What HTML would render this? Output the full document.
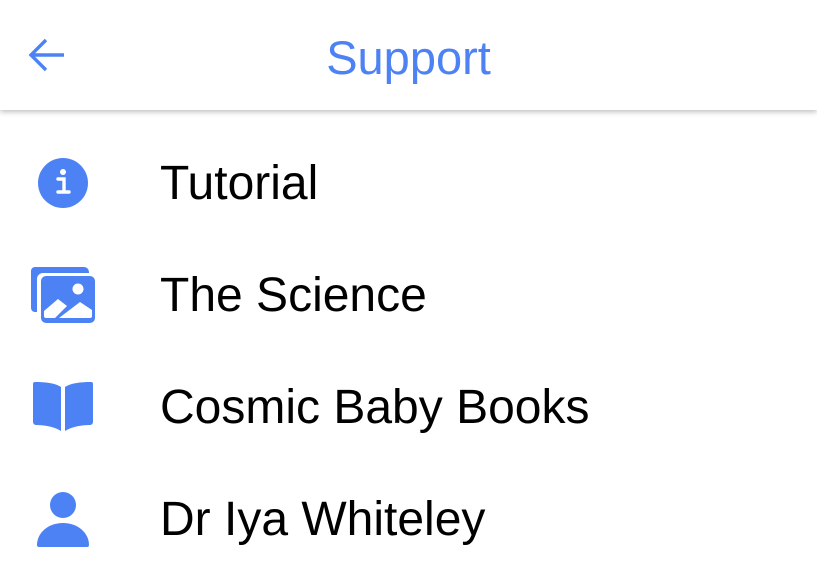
<!DOCTYPE html>
<html><head><style>
body{margin:0;width:817px;height:570px;background:#fff;font-family:"Liberation Sans",sans-serif;overflow:hidden;position:relative}
.hdr{position:absolute;left:0;top:0;width:817px;height:110px;background:#fff;box-shadow:0 2px 5px rgba(0,0,0,.25)}
.title{position:absolute;left:0;width:817px;top:33px;text-align:center;font-size:47px;color:#4d82f5;line-height:50px}
.row{position:absolute;left:160px;font-size:48px;color:#000;line-height:50px}
svg{position:absolute}
</style></head><body>
<div class="hdr">
<svg style="left:27px;top:36px" width="40" height="38" viewBox="0 0 40 38"><path d="M37 19H5M19 4L4 19l15 15" fill="none" stroke="#4d82f5" stroke-width="3.4"/></svg>
<div class="title">Support</div>
</div>
<svg style="left:38px;top:158px" width="50" height="50" viewBox="0 0 50 50"><circle cx="25" cy="25" r="25" fill="#4d82f5"/><circle cx="25" cy="14" r="3" fill="#fff"/><path d="M20 21h6v13M20 34h11" fill="none" stroke="#fff" stroke-width="3.4" stroke-linecap="round"/></svg>
<svg style="left:31px;top:267px" width="64" height="56" viewBox="0 0 64 56"><path d="M4 0h49a5 5 0 0 1 5 5v1H12a6 6 0 0 0-6 6v33H4a4 4 0 0 1-4-4V4a4 4 0 0 1 4-4z" fill="#4d82f5"/><rect x="10" y="9" width="54" height="47" rx="5" fill="#4d82f5"/><circle cx="47" cy="22" r="5.5" fill="#fff"/><path d="M13 44l14-12 9 7-12 12H15a2 2 0 0 1-2-2z M28 51l21-16 12 8v6a2 2 0 0 1-2 2z" fill="#fff"/></svg>
<svg style="left:33px;top:381px" width="60" height="50" viewBox="0 0 60 50"><path d="M2 1c10 0 20 1 26 5v44C22 46 12 44 3 44a3 3 0 0 1-3-3V3a2 2 0 0 1 2-2z M58 1c-10 0-20 1-26 5v44c6-4 16-6 25-6a3 3 0 0 0 3-3V3a2 2 0 0 0-2-2z" fill="#4d82f5"/></svg>
<svg style="left:37px;top:492px" width="52" height="55" viewBox="0 0 52 55"><circle cx="26" cy="13" r="13" fill="#4d82f5"/><path d="M0 53c0-12 11-22 26-22s26 10 26 22a2 2 0 0 1-2 2H2a2 2 0 0 1-2-2z" fill="#4d82f5"/></svg>
<div class="row" style="top:159px">Tutorial</div>
<div class="row" style="top:271px">The Science</div>
<div class="row" style="top:383px">Cosmic Baby Books</div>
<div class="row" style="top:495px">Dr Iya Whiteley</div>
</body></html>
